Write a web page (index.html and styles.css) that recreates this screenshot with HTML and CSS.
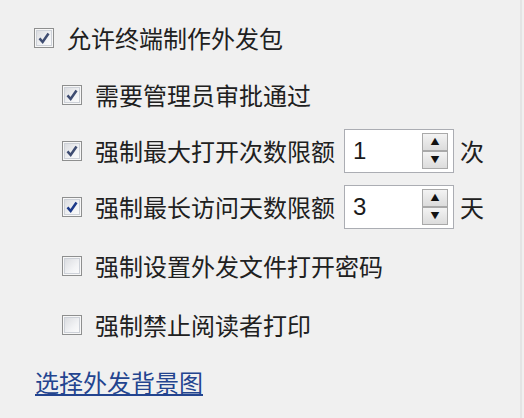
FILE: index.html
```html
<!DOCTYPE html>
<html lang="zh-CN">
<head>
    <meta charset="UTF-8">
    <title>外发包设置</title>
    <link rel="stylesheet" href="styles.css">
</head>
<body>
    <div class="panel">
        <div class="row r1">
            <span class="check on"><svg viewBox="0 0 20 20"><path d="M5 10.5 L8.5 14.5 L15 5" /></svg></span>
            <span class="label">允许终端制作外发包</span>
        </div>
        <div class="row sub r2">
            <span class="check on"><svg viewBox="0 0 20 20"><path d="M5 10.5 L8.5 14.5 L15 5" /></svg></span>
            <span class="label">需要管理员审批通过</span>
        </div>
        <div class="row sub r3">
            <span class="check on"><svg viewBox="0 0 20 20"><path d="M5 10.5 L8.5 14.5 L15 5" /></svg></span>
            <span class="label">强制最大打开次数限额</span>
            <div class="spin">
                <span class="value">1</span>
                <div class="buttons">
                    <span class="btn">&#9650;</span>
                    <span class="btn">&#9660;</span>
                </div>
            </div>
            <span class="unit">次</span>
        </div>
        <div class="row sub r4">
            <span class="check on focus"><svg viewBox="0 0 20 20"><path d="M5 10.5 L8.5 14.5 L15 5" /></svg></span>
            <span class="label">强制最长访问天数限额</span>
            <div class="spin">
                <span class="value">3</span>
                <div class="buttons">
                    <span class="btn">&#9650;</span>
                    <span class="btn">&#9660;</span>
                </div>
            </div>
            <span class="unit">天</span>
        </div>
        <div class="row sub r5">
            <span class="check"></span>
            <span class="label">强制设置外发文件打开密码</span>
        </div>
        <div class="row sub r6">
            <span class="check"></span>
            <span class="label">强制禁止阅读者打印</span>
        </div>
        <div class="row r7">
            <a class="link" href="#">选择外发背景图</a>
        </div>
    </div>
</body>
</html>
```

FILE: styles.css
```css
body {
    margin: 0;
    background-color: #f0f0f0;
    font-family: "Noto Sans CJK SC", "Noto Sans", sans-serif;
    color: #202020;
}
.panel {
    height: 418px;
    box-sizing: border-box;
    padding: 10px 0 0 34px;
    border-right: 2px solid #e4e4e4;
    width: 522px;
}
.row {
    display: flex;
    align-items: center;
}
.sub { padding-left: 28px; }
.r1 { height: 56px; }
.r2 { height: 57px; }
.r3 { height: 55px; }
.r4 { height: 58px; }
.r5 { height: 60px; }
.r6 { height: 58px; }
.r7 { height: 56px; padding-left: 1px; }
.label {
    font-size: 24px;
    line-height: 30px;
    margin-left: 13px;
    white-space: nowrap;
}
.check {
    width: 18px;
    height: 18px;
    border: 1px solid #8e8f8f;
    background: linear-gradient(135deg, #d6d8dc 0%, #f2f3f5 60%, #fdfdfd 100%);
    box-shadow: inset 0 0 0 1px #f7f7f7, inset 0 0 0 2px #cdd1d8;
    flex-shrink: 0;
    display: flex;
}
.check svg {
    width: 18px;
    height: 18px;
}
.check path {
    fill: none;
    stroke: #3f4d72;
    stroke-width: 2.8;
}
.check.focus path { stroke: #1c3a8a; }
.spin {
    margin-left: 9px;
    width: 110px;
    height: 44px;
    border: 1px solid #abadb3;
    background: #fff;
    display: flex;
    align-items: center;
    justify-content: space-between;
    padding: 0 5px 0 8px;
    box-sizing: border-box;
}
.value {
    font-family: "Liberation Sans", Arial, sans-serif;
    font-size: 24px;
    line-height: 30px;
    color: #1a1a1a;
}
.buttons {
    display: flex;
    flex-direction: column;
}
.btn {
    width: 24px;
    height: 16px;
    border: 1px solid #a9a9a9;
    background: linear-gradient(#f3f3f3, #dcdcdc);
    font-size: 9px;
    line-height: 16px;
    text-align: center;
    color: #111;
}
.unit {
    font-size: 24px;
    line-height: 30px;
    margin-left: 6px;
}
.link {
    font-size: 24px;
    line-height: 30px;
    color: #23448f;
    text-decoration: underline;
    text-underline-offset: 2px;
}
```
